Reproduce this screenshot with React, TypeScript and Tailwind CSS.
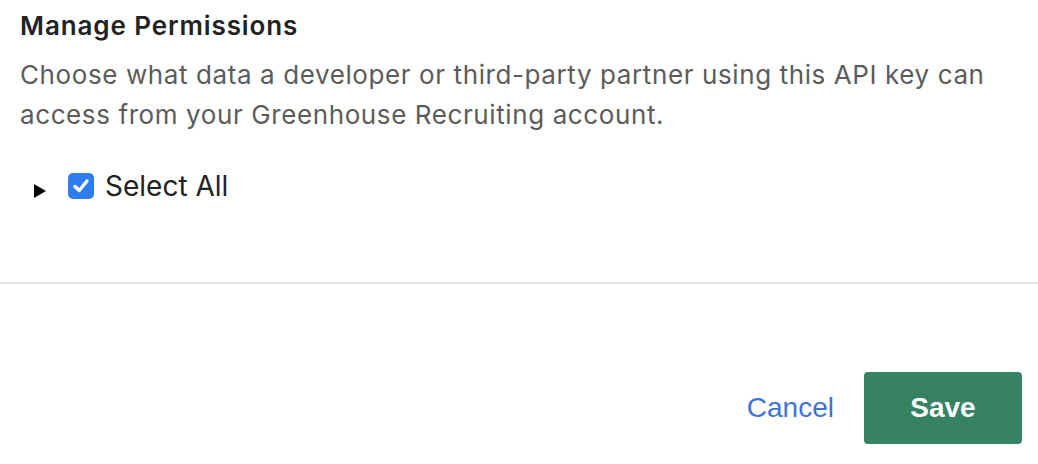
import React from "react";

export default function App() {
  return (
    <div className="w-[1038px] h-[464px] bg-white flex flex-col" style={{ fontFamily: "Inter, 'Noto Sans', sans-serif" }}>
      <div className="px-5 pt-[10px]">
        <h2 className="text-[26px] leading-[32px] font-semibold tracking-[0.9px] text-[#222222]">Manage Permissions</h2>
        <p className="mt-[13px] text-[26px] leading-[40px] tracking-[0.6px] text-[#5c5c5c]">
          Choose what data a developer or third-party partner using this API key can access from your Greenhouse Recruiting account.
        </p>
        <div className="mt-[35px] flex items-center h-[32px]">
          <svg width="12" height="14" viewBox="0 0 12 14" className="ml-[14px] mt-[10px]">
            <path d="M0 0 L12 7 L0 14 Z" fill="#000" />
          </svg>
          <span className="ml-[22px] w-[26px] h-[26px] rounded-[5px] bg-[#2f7cf0] flex items-center justify-center">
            <svg width="20" height="20" viewBox="0 0 20 20">
              <path d="M4 10.5 L8.2 14.5 L16 5" stroke="#fff" strokeWidth="3.4" fill="none" strokeLinecap="round" strokeLinejoin="round" />
            </svg>
          </span>
          <span className="ml-[11px] text-[28px] leading-[32px] text-[#222222]">Select All</span>
        </div>
      </div>
      <div className="mt-[80px] h-[2px] bg-[#e2e2e2]" />
      <div className="flex-1 flex items-end justify-end pr-[16px] pb-[20px] gap-[30px]" style={{ fontFamily: "'Liberation Sans', Arial, sans-serif" }}>
        <button className="text-[28px] text-[#3e73d7] h-[72px]">Cancel</button>
        <button className="w-[158px] h-[72px] rounded-[4px] bg-[#378262] text-white text-[28px] font-bold">Save</button>
      </div>
    </div>
  );
}
